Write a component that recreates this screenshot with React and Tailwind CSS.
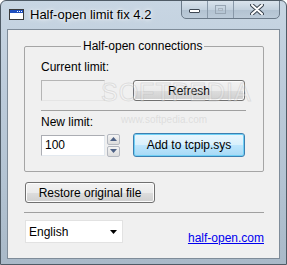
import { useState } from "react";

function WinButton({ children, className = "", isDefault = false }) {
  return (
    <div
      className={`flex items-center justify-center rounded-[3px] border text-[12px] text-black ${
        isDefault
          ? "border-[#3c7fb1] bg-[linear-gradient(180deg,#eaf6fd_0%,#d9f0fc_50%,#bee6fd_51%,#a7d9f5_100%)] shadow-[inset_0_0_0_1px_#6fd0f5]"
          : "border-[#707070] bg-[linear-gradient(180deg,#f2f2f2_0%,#ebebeb_50%,#dddddd_51%,#cfcfcf_100%)] shadow-[inset_0_0_0_1px_#fcfcfc]"
      } ${className}`}
    >
      {children}
    </div>
  );
}

function SpinArrow({ up }) {
  return (
    <div className="flex h-[11px] w-[13px] items-center justify-center rounded-[2px] border border-[#b4b8c0] bg-[linear-gradient(180deg,#f4f4f4,#dcdcdc)]">
      <svg width="7" height="4" viewBox="0 0 7 4">
        <path d={up ? "M0 4 L3.5 0 L7 4 Z" : "M0 0 L3.5 4 L7 0 Z"} fill="#4d6185" />
      </svg>
    </div>
  );
}

export default function App() {
  const [limit, setLimit] = useState("100");

  return (
    <div
      className="relative flex h-[265px] w-[287px] flex-col overflow-hidden rounded-t-[6px] border border-[#4f5b66] bg-[linear-gradient(180deg,#c8d6e3_0%,#bccbda_35%,#b3c3d2_70%,#a9b9c8_100%)]"
      style={{ fontFamily: '"Liberation Sans", Arial, sans-serif' }}
    >
      {/* TITLE BAR */}
      <div className="flex h-[28px] shrink-0 items-start">
        <div className="ml-[8px] mt-[8px] h-[11px] w-[15px] border border-[#3a3a3a] bg-white">
          <div className="flex h-[3px] items-center justify-end gap-[1px] bg-[#1f4fbf] pr-[1px]">
            <span className="h-[1px] w-[1px] bg-white" />
            <span className="h-[1px] w-[1px] bg-white" />
            <span className="h-[1px] w-[1px] bg-white" />
          </div>
        </div>
        <span className="ml-[6px] mt-[6px] text-[13px] leading-[15px] text-black [text-shadow:0_0_6px_#ffffff,0_0_3px_#ffffff]">
          Half-open limit fix 4.2
        </span>

        {/* caption buttons */}
        <div className="ml-auto mr-[6px] -mt-[1px] flex h-[19px] overflow-hidden rounded-b-[5px] border border-[#6b7a89] bg-[linear-gradient(180deg,#d9e3ec_0%,#c3d1de_50%,#b2c2d1_51%,#bccbd9_100%)]">
          <div className="flex w-[26px] items-center justify-center border-r border-[#8898a8]">
            <div className="mt-[3px] h-[4px] w-[11px] rounded-[1px] border border-[#3d4753] bg-white" />
          </div>
          <div className="flex w-[26px] items-center justify-center border-r border-[#8898a8]">
            <div className="flex h-[9px] w-[11px] items-center justify-center border border-[#97a5b3]">
              <div className="h-[3px] w-[5px] border border-[#a8b4c0]" />
            </div>
          </div>
          <div className="flex w-[45px] items-center justify-center">
            <svg width="14" height="11" viewBox="0 0 14 11">
              <path
                d="M2 1 L7 5.5 L12 1 M2 10 L7 5.5 L12 10"
                stroke="#3d4753"
                strokeWidth="4"
                strokeLinecap="round"
                fill="none"
              />
              <path
                d="M2 1 L7 5.5 L12 1 M2 10 L7 5.5 L12 10"
                stroke="#ffffff"
                strokeWidth="2"
                strokeLinecap="round"
                fill="none"
              />
            </svg>
          </div>
        </div>
      </div>

      {/* CLIENT AREA */}
      <div className="ml-[6px] flex h-[230px] w-[273px] flex-col border border-[#7f8c99] bg-[#f0f0f0]">
        {/* Group box */}
        <div className="relative ml-[16px] mt-[16px] flex h-[126px] w-[240px] flex-col rounded-[2px] border border-[#a5a5a5] pl-[16px]">
          <span className="absolute -top-[8px] left-[56px] bg-[#f0f0f0] px-[2px] text-[12px] leading-[14px] text-black">
            Half-open connections
          </span>

          <span className="mt-[13px] text-[12px] leading-[14px] text-black">Current limit:</span>

          <div className="mt-[6px] flex items-center">
            <div className="h-[21px] w-[64px] border border-[#b5b5b5] border-b-[#e5e5e5] border-r-[#e5e5e5] bg-[#f0f0f0]" />
            <WinButton className="ml-[28px] h-[21px] w-[112px]">Refresh</WinButton>
          </div>

          <div className="mt-[9px] h-[1px] w-[205px] bg-[#a0a0a0]" />

          <span className="mt-[4px] text-[12px] leading-[14px] text-black">New limit:</span>

          <div className="mt-[4px] flex items-center">
            <input
              value={limit}
              onChange={(e) => setLimit(e.target.value)}
              className="h-[21px] w-[64px] border border-[#abadb3] border-b-[#e3e9ef] border-r-[#e3e9ef] bg-white px-[3px] text-[12px] text-black outline-none"
            />
            <div className="ml-[2px] flex flex-col gap-[1px]">
              <SpinArrow up />
              <SpinArrow />
            </div>
            <WinButton isDefault className="ml-[13px] h-[24px] w-[112px]">
              Add to tcpip.sys
            </WinButton>
          </div>
        </div>

        <WinButton className="ml-[17px] mt-[10px] h-[21px] w-[130px]">Restore original file</WinButton>

        <div className="ml-[16px] mt-[9px] h-[1px] w-[240px] bg-[#a0a0a0]" />

        <div className="ml-[17px] mt-[7px] flex w-[239px] items-end">
          <div className="flex h-[23px] w-[98px] items-center justify-between border border-[#e2e2e2] bg-white pl-[3px] pr-[5px]">
            <span className="text-[12px] leading-[14px] text-black">English</span>
            <svg width="7" height="4" viewBox="0 0 7 4">
              <path d="M0 0 L7 0 L3.5 4 Z" fill="#000" />
            </svg>
          </div>
          <a href="#" className="ml-auto mb-[-2px] text-[12px] leading-[14px] text-[#0000ee] underline">
            half-open.com
          </a>
        </div>
      </div>

      {/* watermark overlay */}
      <div className="pointer-events-none absolute left-[100px] top-[78px] text-[25px] leading-[26px] tracking-[1px] text-white/30 [-webkit-text-stroke:1px_rgba(170,170,170,0.3)]">
        SOFTPEDIA
      </div>
      <div className="pointer-events-none absolute left-[120px] top-[113px] text-[10px] leading-[12px] text-[#d0d0d0]/60">
        www.softpedia.com
      </div>
    </div>
  );
}
